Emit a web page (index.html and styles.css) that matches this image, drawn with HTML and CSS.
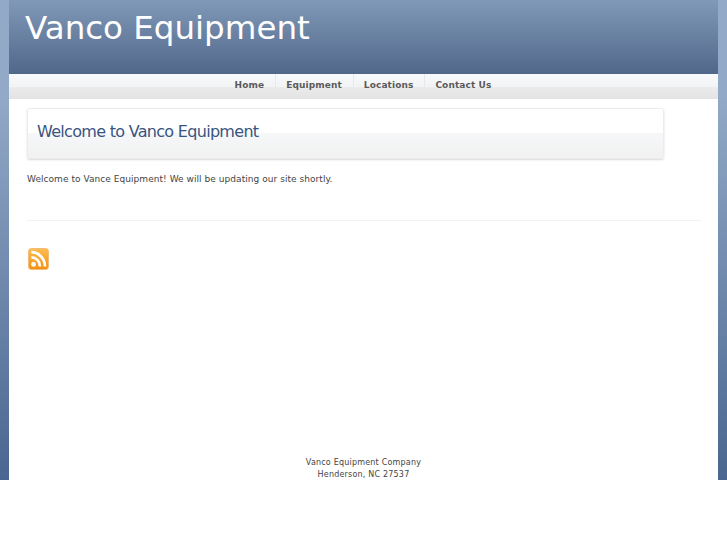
FILE: index.html
```html
<!DOCTYPE html>
<html lang="en">
<head>
    <meta charset="UTF-8">
    <title>Vanco Equipment</title>
    <link rel="stylesheet" href="styles.css">
</head>
<body>

<div class="backdrop">
    <div class="page">
        <div class="header">
            <h1>Vanco Equipment</h1>
        </div>

        <ul class="nav">
            <li><a href="#">Home</a></li>
            <li><a href="#">Equipment</a></li>
            <li><a href="#">Locations</a></li>
            <li><a href="#">Contact Us</a></li>
        </ul>

        <div class="content">
            <div class="title-box">
                <h2>Welcome to Vanco Equipment</h2>
            </div>
            <p class="intro">Welcome to Vance Equipment! We will be updating our site shortly.</p>
            <div class="divider"></div>
            <a class="rss" href="#">
                <svg width="21" height="22" viewBox="0 0 22 22" preserveAspectRatio="none">
                    <defs>
                        <linearGradient id="rssFill" x1="0" y1="0" x2="0" y2="1">
                            <stop offset="0" stop-color="#fdbd50"/>
                            <stop offset="1" stop-color="#f4900e"/>
                        </linearGradient>
                    </defs>
                    <rect x="0.5" y="0.5" width="21" height="21" rx="3" fill="url(#rssFill)" stroke="#f0bb78"/>
                    <circle cx="5.8" cy="16.2" r="2.5" fill="#fff"/>
                    <path d="M3.5 9.4a9.1 9.1 0 0 1 9.1 9.1" fill="none" stroke="#fff" stroke-width="2.8"/>
                    <path d="M3.5 4.2a14.3 14.3 0 0 1 14.3 14.3" fill="none" stroke="#fff" stroke-width="2.8"/>
                </svg>
            </a>
        </div>

        <div class="footer">
            Vanco Equipment Company<br>
            Henderson, NC 27537
        </div>
    </div>
</div>

</body>
</html>
```

FILE: styles.css
```css
* {
    margin: 0;
    padding: 0;
    box-sizing: border-box;
}

body {
    font-family: "DejaVu Sans", sans-serif;
    background-color: #fff;
    color: #333;
}

.backdrop {
    height: 480px;
    padding: 0 9px;
    background: linear-gradient(#92a9c7, #92a9c7 20%, #4a6690);
}

.page {
    height: 480px;
    background-color: #fff;
}

.header {
    height: 74px;
    padding: 9px 16px 0;
    background: linear-gradient(#8199b8, #50678a);
}

.header h1 {
    font-size: 32.5px;
    font-weight: normal;
    line-height: 38px;
    color: #fff;
}

.nav {
    display: flex;
    justify-content: center;
    height: 25px;
    list-style: none;
    background: linear-gradient(#f8f9fb 0, #f2f3f5 52%, #ebebeb 52%, #e3e3e3 100%);
}

.nav li {
    height: 20px;
    border-left: 1px solid #e8e9eb;
}

.nav li:first-child {
    border-left: none;
}

.nav a {
    display: block;
    padding: 0 11px 0 10px;
    font-size: 9px;
    font-weight: bold;
    line-height: 23px;
    letter-spacing: 0.1px;
    color: #5a5a5a;
    text-decoration: none;
}

.content {
    padding: 9px 17px 0 18px;
}

.title-box {
    width: 637px;
    height: 51px;
    padding-left: 9px;
    border: 1px solid #ececec;
    border-radius: 3px;
    background: linear-gradient(#fff 0, #fff 50%, #f6f7f9 50%, #f1f1f1 100%);
    box-shadow: 0 1px 2px #d8d8d8;
}

.title-box h2 {
    font-size: 16px;
    font-weight: normal;
    line-height: 46px;
    letter-spacing: -0.7px;
    color: #3a5480;
}

.intro {
    margin-top: 14px;
    font-size: 9px;
    line-height: 12px;
    letter-spacing: 0.05px;
    color: #444;
}

.divider {
    height: 1px;
    margin-top: 35px;
    background-color: #f3f3f3;
}

.rss {
    display: block;
    width: 21px;
    height: 22px;
    margin: 27px 0 0 1px;
}

.rss svg {
    display: block;
}

.footer {
    margin-top: 187px;
    font-size: 8px;
    line-height: 12px;
    letter-spacing: 0.2px;
    text-align: center;
    color: #444;
}
```
